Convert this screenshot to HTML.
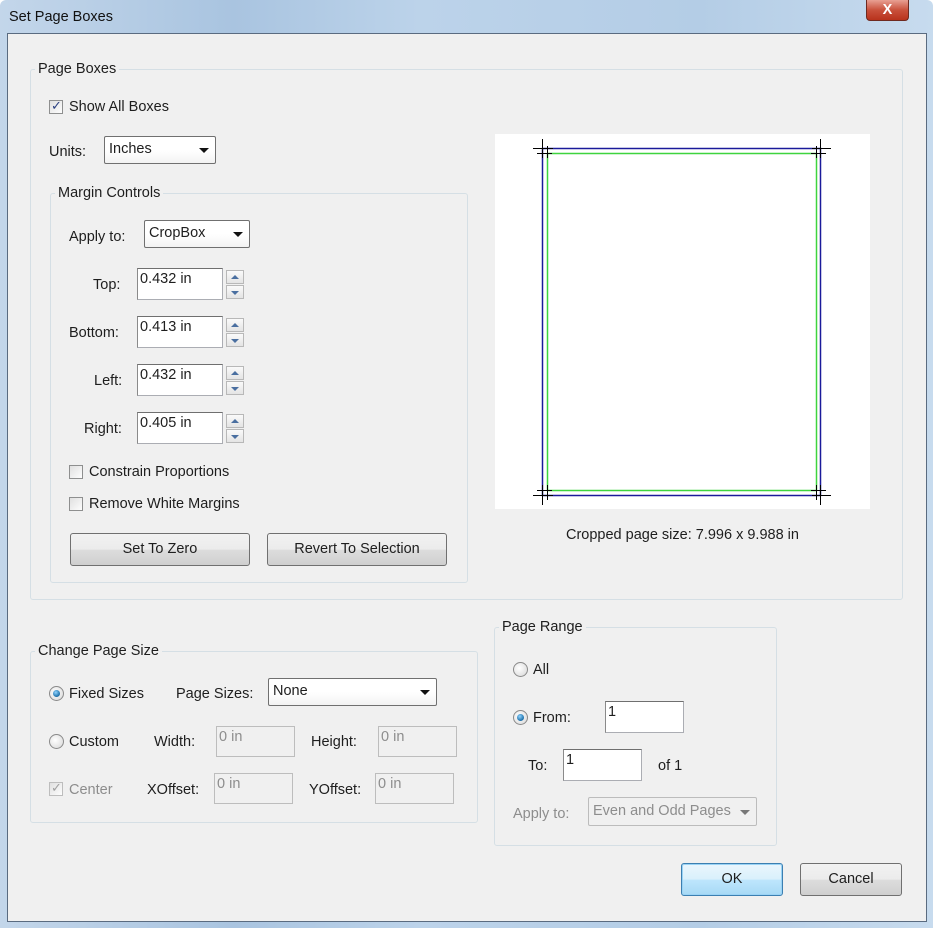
<!DOCTYPE html>
<html><head><meta charset="utf-8"><style>
*{box-sizing:border-box;margin:0;padding:0}
body{width:933px;height:928px;overflow:hidden;background:#fff;font-family:"Liberation Sans",sans-serif;font-size:14.5px;color:#1e1e1e;position:relative}
.a{position:absolute;white-space:nowrap}
.frame{position:absolute;left:0;top:0;width:933px;height:928px;background:linear-gradient(90deg,#c3d6ea 0%,#a9c4e0 25%,#bcd3ea 45%,#b4cde6 75%,#c7dbee 100%);border-radius:6px 6px 0 0}
.client{position:absolute;left:7px;top:33px;width:920px;height:889px;background:#f0f0f0;border:1px solid #5a6b80}
.grp{position:absolute;border:1px solid #d5dfe5;border-radius:3px}
.gl{position:absolute;background:#f0f0f0;padding:0 3px}
.cb{position:absolute;width:14px;height:14px;border:1px solid #8e8f8f;background:linear-gradient(135deg,#e0e0e0,#fdfdfd)}
.rad{position:absolute;width:15px;height:15px;border-radius:50%;border:1px solid #8a8a8a;background:radial-gradient(circle at 40% 40%,#fff,#d6d6d6)}
.rad.on:after{content:"";position:absolute;left:3px;top:3px;width:7px;height:7px;border-radius:50%;background:radial-gradient(circle at 40% 35%,#8fd3ff,#1b6ea8 70%,#0b3e6a)}
.tb{position:absolute;background:#fff;border:1px solid #abadb3;border-top-color:#6f6f6f;border-left-color:#8a8a8a;padding:2px 2px}
.tb.dis{background:#f0f0f0;color:#8d8d8d;border-color:#bdbdbd}
.dd{position:absolute;border:1px solid #707070;border-radius:2px;background:linear-gradient(#fff 50%,#f3f3f3);padding:4px 4px}
.dd:after{content:"";position:absolute;right:6px;top:50%;margin-top:-2px;border:5px solid transparent;border-top:5px solid #111;border-bottom:0}
.btn{position:absolute;border:1px solid #707070;border-radius:3px;background:linear-gradient(#f2f2f2 0%,#ebebeb 50%,#dddddd 51%,#cfcfcf 100%);text-align:center}
.sp{position:absolute;width:18px;height:14px;border:1px solid #b8b8b8;background:linear-gradient(#fafafa,#e4e4e4)}
.sp:after{content:"";position:absolute;left:4px;top:4px;border:4px solid transparent}
.up:after{border-bottom:4px solid #4a6fa0;border-top:0}
.dn:after{border-top:4px solid #4a6fa0;border-bottom:0;top:5px}
.gray{color:#8d8d8d}
</style></head><body>
<div class="frame"></div>
<div class="a" style="left:9px;top:9px;color:#111">Set Page Boxes</div>
<div class="a" style="left:866px;top:0;width:43px;height:21px;border:1px solid #6e2a20;border-top:0;border-radius:0 0 4px 4px;background:linear-gradient(#e8a093,#c9513c 50%,#b8321c);color:#fff;font-weight:bold;text-align:center;line-height:20px">X</div>
<div class="client"></div>

<div class="grp" style="left:30px;top:69px;width:873px;height:531px"></div>
<div class="gl" style="left:35px;top:61px">Page Boxes</div>
<div class="cb" style="left:49px;top:100px"><span style="position:absolute;left:1px;top:-3px;font-size:13px;color:#2a3f80">✓</span></div>
<div class="a" style="left:69px;top:99px">Show All Boxes</div>
<div class="a" style="left:49px;top:144px">Units:</div>
<div class="dd" style="left:104px;top:136px;width:112px;height:28px">Inches</div>

<div class="grp" style="left:50px;top:193px;width:418px;height:390px"></div>
<div class="gl" style="left:55px;top:185px">Margin Controls</div>
<div class="a" style="left:69px;top:229px">Apply to:</div>
<div class="dd" style="left:144px;top:220px;width:106px;height:28px">CropBox</div>

<div class="a" style="left:93px;top:277px">Top:</div>
<div class="tb" style="left:137px;top:268px;width:86px;height:32px">0.432 in</div>
<div class="sp up" style="left:226px;top:270px"></div><div class="sp dn" style="left:226px;top:285px"></div>
<div class="a" style="left:69px;top:325px">Bottom:</div>
<div class="tb" style="left:137px;top:316px;width:86px;height:32px">0.413 in</div>
<div class="sp up" style="left:226px;top:318px"></div><div class="sp dn" style="left:226px;top:333px"></div>
<div class="a" style="left:94px;top:373px">Left:</div>
<div class="tb" style="left:137px;top:364px;width:86px;height:32px">0.432 in</div>
<div class="sp up" style="left:226px;top:366px"></div><div class="sp dn" style="left:226px;top:381px"></div>
<div class="a" style="left:84px;top:421px">Right:</div>
<div class="tb" style="left:137px;top:412px;width:86px;height:32px">0.405 in</div>
<div class="sp up" style="left:226px;top:414px"></div><div class="sp dn" style="left:226px;top:429px"></div>

<div class="cb" style="left:69px;top:465px"></div>
<div class="a" style="left:89px;top:464px">Constrain Proportions</div>
<div class="cb" style="left:69px;top:497px"></div>
<div class="a" style="left:89px;top:496px">Remove White Margins</div>
<div class="btn" style="left:70px;top:533px;width:180px;height:33px;line-height:31px">Set To Zero</div>
<div class="btn" style="left:267px;top:533px;width:180px;height:33px;line-height:31px">Revert To Selection</div>

<svg class="a" style="left:495px;top:134px" width="375" height="375">
<rect width="375" height="375" fill="#fff"/>
<rect x="47.5" y="14.5" width="278" height="347" fill="none" stroke="#1a1a9a" stroke-width="1.5"/>
<rect x="52.5" y="19.5" width="269" height="337" fill="none" stroke="#3ed43e" stroke-width="1.5"/>
<g stroke="#000" stroke-width="1">
<path d="M38 14.5H58M47.5 5V24M42 19.5H57M52.5 12V24"/>
<path d="M317 14.5H336M325.5 5V24M316 19.5H331M321.5 12V24"/>
<path d="M38 361.5H58M47.5 351V371M42 356.5H57M52.5 351V366"/>
<path d="M317 361.5H336M325.5 351V371M316 356.5H331M321.5 351V366"/>
</g></svg>
<div class="a" style="left:566px;top:527px">Cropped page size: 7.996 x 9.988 in</div>

<div class="grp" style="left:30px;top:651px;width:448px;height:172px"></div>
<div class="gl" style="left:35px;top:643px">Change Page Size</div>
<div class="rad on" style="left:49px;top:686px"></div>
<div class="a" style="left:69px;top:686px">Fixed Sizes</div>
<div class="a" style="left:176px;top:686px">Page Sizes:</div>
<div class="dd" style="left:268px;top:678px;width:169px;height:28px">None</div>
<div class="rad" style="left:49px;top:734px"></div>
<div class="a" style="left:69px;top:734px">Custom</div>
<div class="a" style="left:154px;top:734px">Width:</div>
<div class="tb dis" style="left:216px;top:726px;width:79px;height:31px">0 in</div>
<div class="a" style="left:311px;top:734px">Height:</div>
<div class="tb dis" style="left:378px;top:726px;width:79px;height:31px">0 in</div>
<div class="cb" style="left:49px;top:782px;border-color:#bdbdbd"><span style="position:absolute;left:1px;top:-3px;font-size:13px;color:#a0a0a0">✓</span></div>
<div class="a gray" style="left:69px;top:782px">Center</div>
<div class="a" style="left:147px;top:782px">XOffset:</div>
<div class="tb dis" style="left:214px;top:773px;width:79px;height:31px">0 in</div>
<div class="a" style="left:309px;top:782px">YOffset:</div>
<div class="tb dis" style="left:375px;top:773px;width:79px;height:31px">0 in</div>

<div class="grp" style="left:494px;top:627px;width:283px;height:219px"></div>
<div class="gl" style="left:499px;top:619px">Page Range</div>
<div class="rad" style="left:513px;top:662px"></div>
<div class="a" style="left:533px;top:662px">All</div>
<div class="rad on" style="left:513px;top:710px"></div>
<div class="a" style="left:533px;top:710px">From:</div>
<div class="tb" style="left:605px;top:701px;width:79px;height:32px">1</div>
<div class="a" style="left:528px;top:758px">To:</div>
<div class="tb" style="left:563px;top:749px;width:79px;height:32px">1</div>
<div class="a" style="left:658px;top:758px">of 1</div>
<div class="a gray" style="left:513px;top:806px">Apply to:</div>
<div class="dd gray" style="left:588px;top:797px;width:169px;height:29px;border-color:#bcbcbc;background:#f0f0f0;padding-top:5px">Even and Odd Pages</div>
<style>.dd.gray:after{border-top-color:#777}</style>

<div class="btn" style="left:681px;top:863px;width:102px;height:33px;line-height:31px;border-color:#3c7fb1;background:linear-gradient(#eaf6fd,#d9f0fc 50%,#bee6fd 51%,#a7d9f5);box-shadow:inset 0 0 0 1px #9ad3f5">OK</div>
<div class="btn" style="left:800px;top:863px;width:102px;height:33px;line-height:31px">Cancel</div>
</body></html>
